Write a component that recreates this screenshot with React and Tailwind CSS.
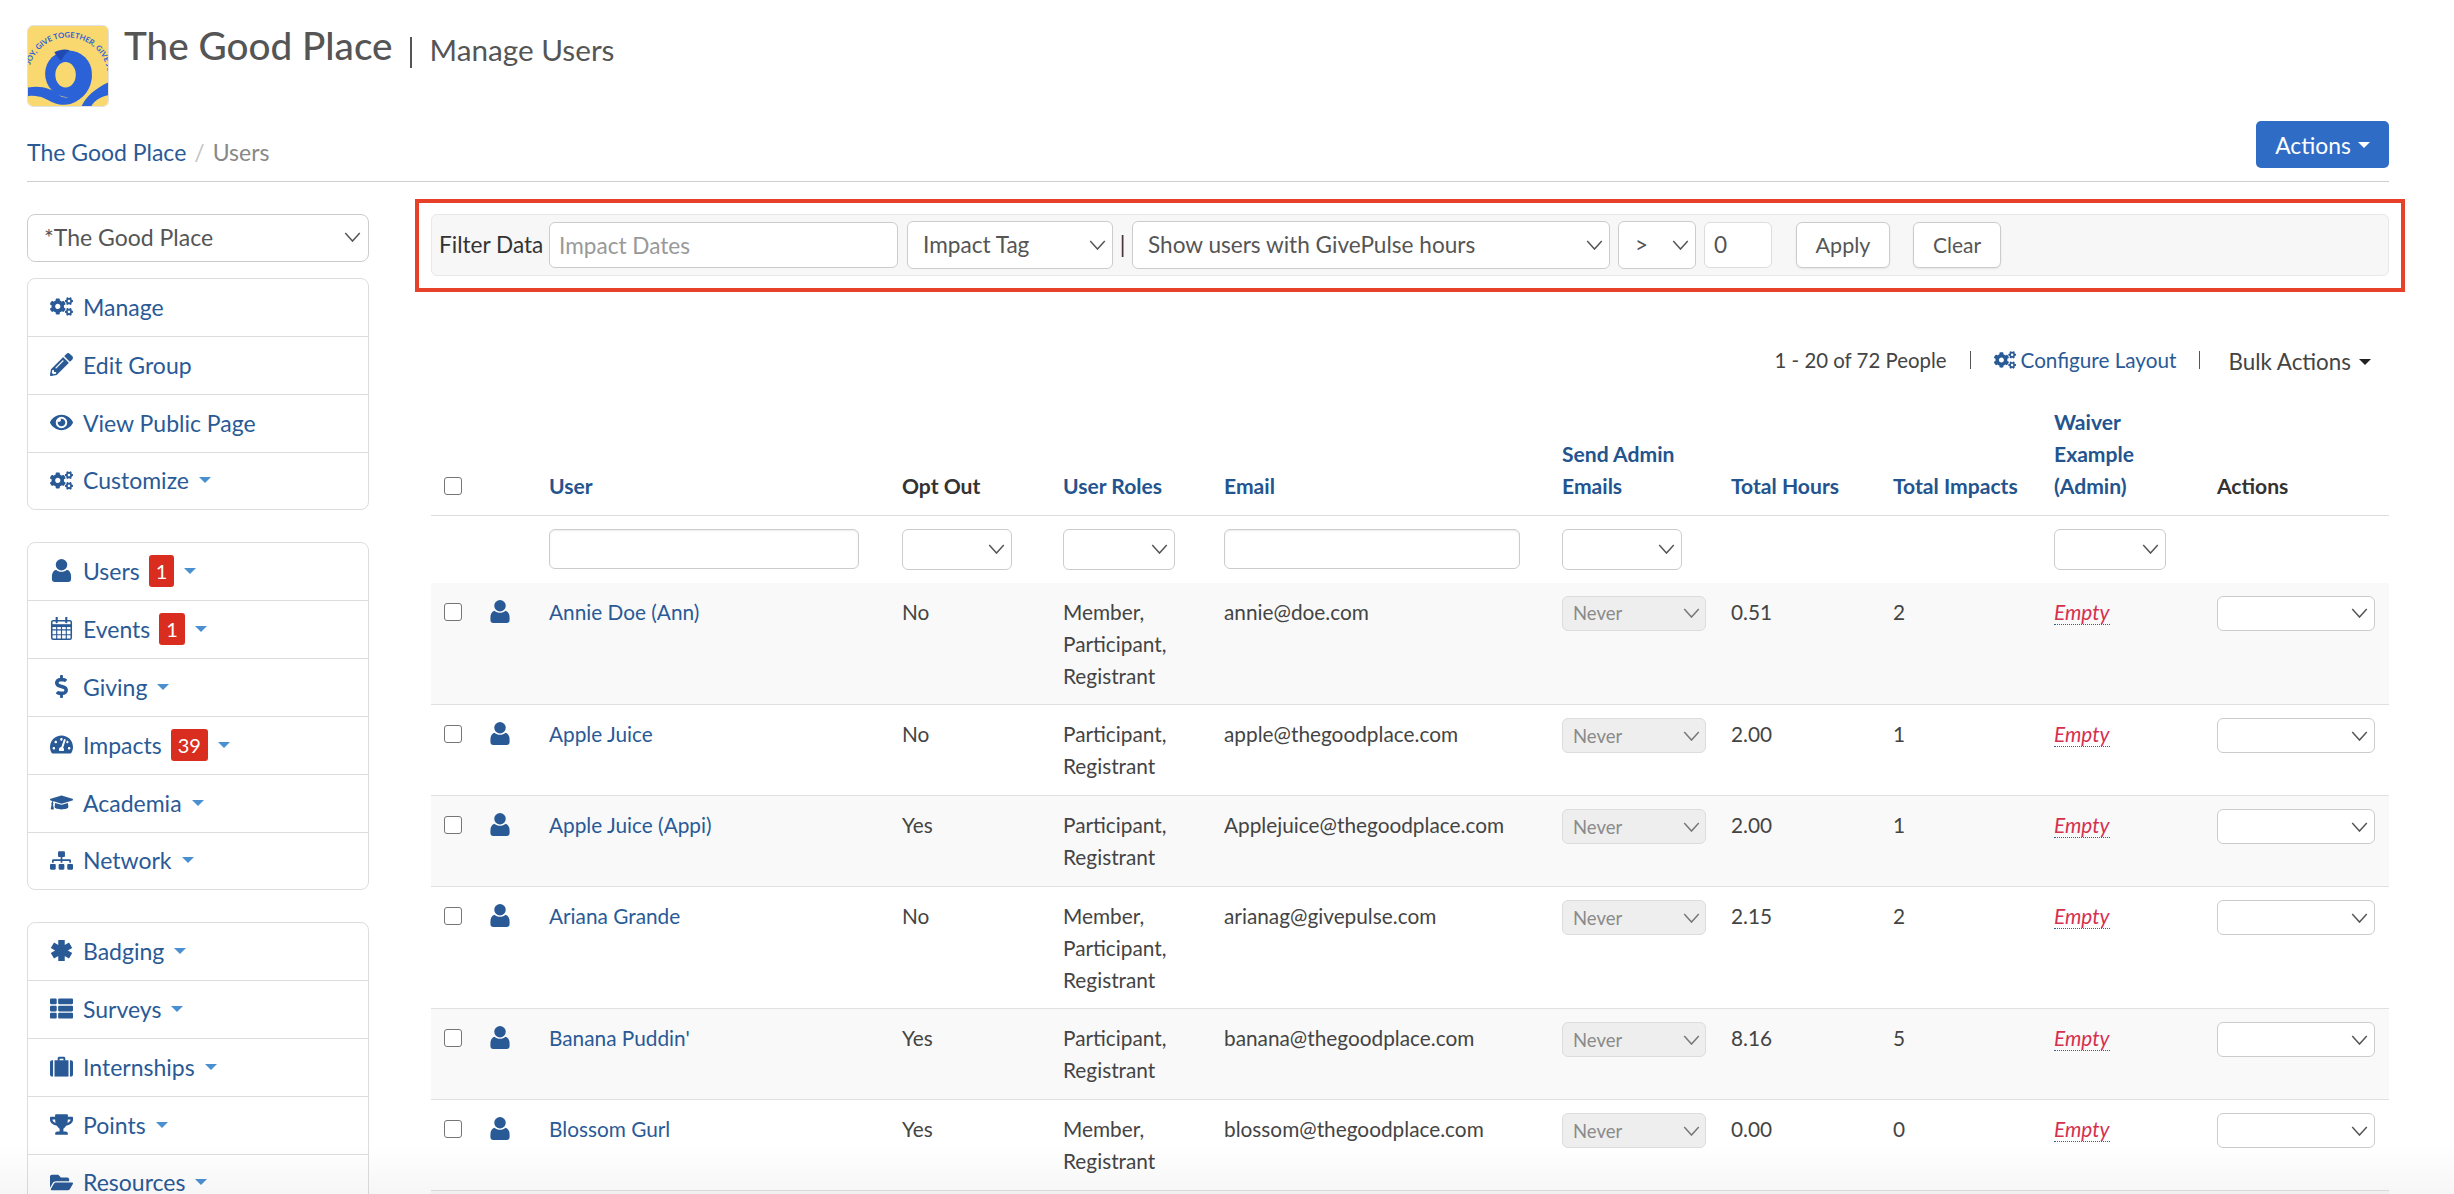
import React from 'react';
import {
  FaCogs, FaPencilAlt, FaEye, FaDollarSign, FaTachometerAlt,
  FaGraduationCap, FaSitemap, FaThList, FaTrophy, FaFolderOpen,
} from 'react-icons/fa';

const UserIcon = ({ className }) => (
  <svg viewBox="0 0 20 24" className={className} fill="currentColor">
    <circle cx="10" cy="6" r="6" />
    <path d="M4.4 11.2c1.4 1.5 3.4 2.2 5.6 2.2s4.200-.7 5.600-2.200c2.700.6 4.400 3.300 4.400 6.800v3.200c0 1.600-1.200 2.800-2.800 2.800H2.800C1.200 24 0 22.800 0 21.200V18c0-3.500 1.700-6.200 4.400-6.800z" />
  </svg>
);

const CalendarIcon = ({ className }) => (
  <svg viewBox="0 0 22 24" className={className} fill="none" stroke="currentColor">
    <rect x="0.8" y="3.800" width="20.400" height="19.400" rx="1.500" strokeWidth="1.600" />
    <path d="M1 9h20" strokeWidth="3" />
    <path d="M1 13.500h20M1 18.500h20M6 10v13M11 10v13M16 10v13" strokeWidth="1.200" />
    <path d="M6 0.500v5M16 0.500v5" strokeWidth="2.200" strokeLinecap="round" />
  </svg>
);

const AsteriskIcon = ({ className }) => (
  <svg viewBox="0 0 22 22" className={className} fill="none" stroke="currentColor" strokeWidth="6.200">
    <path d="M11 1v20M2.300 6l17.400 10M2.300 16l17.400-10" />
  </svg>
);

const BriefcaseIcon = ({ className }) => (
  <svg viewBox="0 0 24 22" className={className} fill="currentColor">
    <path d="M8 5V2.500C8 1.500 8.800.8 9.700.8h4.600c.9 0 1.700.7 1.700 1.700V5h-2V2.800h-4V5z" />
    <rect x="4.700" y="4.500" width="14.600" height="17" />
    <path d="M3.200 4.500v17H2.200C1 21.500 0 20.500 0 19.300V6.700C0 5.500 1 4.500 2.200 4.500zM20.800 4.500h1C23 4.500 24 5.500 24 6.700v12.600c0 1.200-1 2.200-2.200 2.200h-1z" />
  </svg>
);

const Chevron = ({ className }) => (
  <svg viewBox="0 0 18 11" className={className} fill="none" stroke="currentColor" strokeWidth="1.600">
    <path d="M1 1l8 9 8-9" />
  </svg>
);

const Caret = ({ className }) => (
  <span className={`inline-block w-0 h-0 border-x-[6px] border-x-transparent border-t-[6px] ${className}`}></span>
);

const Logo = () => (
  <svg viewBox="0 0 82 82" className="w-[82px] h-[82px] rounded-[6px] border border-[#e2e2e2] shrink-0">
    <rect width="82" height="82" fill="#f9d86f" />
    <defs>
      <path id="logo-arc" d="M0 52.800A40.800 40.800 0 0 1 82 52.800" />
    </defs>
    <text fontSize="7.800" fontWeight="700" fill="#2b62d8" fontFamily="Lato, sans-serif">
      <textPath href="#logo-arc" startOffset="13">JOY, GIVE TOGETHER, GIVE JOY</textPath>
    </text>
    <ellipse cx="41.500" cy="49" rx="24" ry="24" fill="#2b62d8" />
    <ellipse cx="38.500" cy="50" rx="10.500" ry="13" fill="#f9d86f" />
    <path d="M27 27c6-3 11-3.500 16-2-4 2-7 6-9 11-3-3-5-6-7-9z" fill="#1f4ab4" />
    <path d="M0 63c14-2 24 1 32 8 4 3 9 3 14 0 8-5 13-12 19.500-21 0 14-8 25-22 30-12 3-20-3-27-6-5-2-11-3-16.500-2z" fill="#2b62d8" />
    <path d="M55 82c4-9 14-18 27-24v13c-9 2-14 6-17 11z" fill="#2b62d8" />
  </svg>
);

const sideMenus = [
  [
    { icon: FaCogs, label: 'Manage' },
    { icon: FaPencilAlt, label: 'Edit Group' },
    { icon: FaEye, label: 'View Public Page' },
    { icon: FaCogs, label: 'Customize', caret: true },
  ],
  [
    { icon: UserIcon, label: 'Users', badge: '1', caret: true },
    { icon: CalendarIcon, label: 'Events', badge: '1', caret: true },
    { icon: FaDollarSign, label: 'Giving', caret: true },
    { icon: FaTachometerAlt, label: 'Impacts', badge: '39', caret: true },
    { icon: FaGraduationCap, label: 'Academia', caret: true },
    { icon: FaSitemap, label: 'Network', caret: true },
  ],
  [
    { icon: AsteriskIcon, label: 'Badging', caret: true },
    { icon: FaThList, label: 'Surveys', caret: true },
    { icon: BriefcaseIcon, label: 'Internships', caret: true },
    { icon: FaTrophy, label: 'Points', caret: true },
    { icon: FaFolderOpen, label: 'Resources', caret: true },
  ],
];

const users = [
  { name: 'Annie Doe (Ann)', optOut: 'No', roles: ['Member,', 'Participant,', 'Registrant'], email: 'annie@doe.com', hours: '0.51', impacts: '2' },
  { name: 'Apple Juice', optOut: 'No', roles: ['Participant,', 'Registrant'], email: 'apple@thegoodplace.com', hours: '2.00', impacts: '1' },
  { name: 'Apple Juice (Appi)', optOut: 'Yes', roles: ['Participant,', 'Registrant'], email: 'Applejuice@thegoodplace.com', hours: '2.00', impacts: '1' },
  { name: 'Ariana Grande', optOut: 'No', roles: ['Member,', 'Participant,', 'Registrant'], email: 'arianag@givepulse.com', hours: '2.15', impacts: '2' },
  { name: "Banana Puddin'", optOut: 'Yes', roles: ['Participant,', 'Registrant'], email: 'banana@thegoodplace.com', hours: '8.16', impacts: '5' },
  { name: 'Blossom Gurl', optOut: 'Yes', roles: ['Member,', 'Registrant'], email: 'blossom@thegoodplace.com', hours: '0.00', impacts: '0' },
];

const SelectBox = ({ label, className = '', disabled }) => (
  <div className={`flex items-center justify-between border rounded-[6px] ${disabled ? 'bg-[#eeeeee] border-[#dcdcdc] text-[#8a8a8a]' : 'bg-white border-[#cccccc] text-[#555555]'} ${className}`}>
    <span>{label}</span>
    <Chevron className={`w-[17px] h-[10px] shrink-0 ${disabled ? 'text-[#777777]' : 'text-[#555555]'}`} />
  </div>
);

const Checkbox = () => (
  <input type="checkbox" className="block appearance-none w-[18px] h-[18px] bg-white border-[1.5px] border-[#767676] rounded-[3px]" />
);

const FilterBar = () => (
  <div className="relative h-[62px] bg-[#f7f7f7] border border-[#e8e8e8] rounded-[6px] flex items-center pl-[7px] text-[22.6px]">
    <span className="w-[110px] text-[#333333]">Filter Data</span>
    <input
      placeholder="Impact Dates"
      className="w-[349px] h-[46px] px-[9px] bg-white border border-[#cccccc] rounded-[6px] placeholder:text-[#999999] outline-none"
    />
    <SelectBox label="Impact Tag" className="w-[206px] h-[48px] ml-[9px] pl-[15px] pr-[6px]" />
    <span className="w-[19px] text-center text-[#333333]">|</span>
    <SelectBox label="Show users with GivePulse hours" className="w-[478px] h-[48px] pl-[15px] pr-[6px]" />
    <SelectBox label=">" className="w-[78px] h-[48px] ml-[8px] pl-[16px] pr-[6px]" />
    <div className="w-[68px] h-[46px] ml-[8px] pl-[9px] flex items-center bg-white border border-[#dddddd] rounded-[6px] text-[#555555]">0</div>
    <button className="w-[94px] h-[46px] ml-[24px] bg-white border border-[#cccccc] rounded-[6px] text-[#555555] text-[21.5px] shadow-[0_1px_2px_rgba(0,0,0,0.08)]">Apply</button>
    <button className="w-[88px] h-[46px] ml-[23px] bg-white border border-[#cccccc] rounded-[6px] text-[#555555] text-[21px] shadow-[0_1px_2px_rgba(0,0,0,0.08)]">Clear</button>
    <div className="absolute -left-[17px] -right-[17px] -top-[16px] -bottom-[17px] border-[4px] border-[#e8412a] pointer-events-none"></div>
  </div>
);

const Th = ({ children, dark }) => (
  <th className={`px-[14px] pb-[13px] align-bottom text-left font-bold text-[21.1px] ${dark ? 'text-[#333333]' : 'text-[#23548e]'}`}>{children}</th>
);

const Td = ({ children, className = '' }) => (
  <td className={`px-[14px] pt-[13px] align-top ${className}`}>{children}</td>
);

export default function App() {
  return (
    <div className="relative h-[1194px] overflow-hidden bg-white pl-[27px] pr-[65px] pt-[25px] text-[23px] leading-[32px] text-[#444444] font-['Lato',sans-serif]">
      {/* Page title */}
      <div className="flex items-start gap-[15px] h-[96px]">
        <Logo />
        <div className="flex items-start text-[#555555]">
          <span className="text-[38.700px] leading-[40px] font-medium">The Good Place</span>
          <span className="ml-[17px] w-[2px] h-[31px] bg-[#555555] mt-[12px]"></span>
          <span className="ml-[18px] text-[29.700px] leading-[44px] mt-[3px]">Manage Users</span>
        </div>
      </div>

      {/* Breadcrumb and actions */}
      <div className="flex items-center justify-between h-[61px] border-b border-[#cfcfcf] pb-[13px]">
        <div className="flex items-center pt-[14px]">
          <span className="text-[#2a5a96]">The Good Place</span>
          <span className="mx-[8px] text-[#c4c4c4]">/</span>
          <span className="text-[#888888]">Users</span>
        </div>
        <button className="w-[133px] h-[47px] flex items-center justify-center gap-[7px] rounded-[5px] bg-[#2e6cc6] text-white text-[22.800px]">
          Actions <Caret className="border-t-white" />
        </button>
      </div>

      <div className="flex pt-[32px] gap-[62px]">
        {/* Sidebar */}
        <aside className="w-[342px] shrink-0">
          <SelectBox label="*The Good Place" className="h-[48px] pl-[16px] pr-[7px] pb-[2px] rounded-[8px]" />
          {sideMenus.map((menu, i) => (
            <div key={i} className={`border border-[#dddddd] rounded-[8px] bg-white ${i === 0 ? 'mt-[16px]' : 'mt-[32px]'}`}>
              {menu.map((item, j) => {
                const Icon = item.icon;
                return (
                  <div key={item.label} className={`flex items-center pl-[22px] pb-[2px] text-[#2a5a96] ${j > 0 ? 'border-t border-[#dddddd]' : ''} ${j === 0 || j === menu.length - 1 ? 'h-[57px]' : 'h-[58px]'}`}>
                    <span className="w-[33px] shrink-0 flex justify-start"><Icon className="w-[23px] h-[23px] text-[#2a5a96]" /></span>
                    <span>{item.label}</span>
                    {item.badge && (
                      <span className="ml-[9px] h-[32px] px-[7px] rounded-[3px] bg-[#d92d20] text-white text-[20px] leading-[32px]">{item.badge}</span>
                    )}
                    {item.caret && <Caret className="ml-[10px] border-t-[#4a90d0]" />}
                  </div>
                );
              })}
            </div>
          ))}
        </aside>

        {/* Main */}
        <main className="flex-1 min-w-0">
          <FilterBar />

          <div className="flex items-center justify-end h-[32px] mt-[68px] pr-[18px] text-[20.400px]">
            <span>1 - 20 of 72 People</span>
            <span className="ml-[23px] w-px h-[18px] bg-[#555555]"></span>
            <FaCogs className="ml-[23px] w-[22px] h-[22px] text-[#2a5a96]" />
            <span className="ml-[5px] text-[#2a5a96] text-[20.700px]">Configure Layout</span>
            <span className="ml-[23px] w-px h-[18px] bg-[#555555]"></span>
            <span className="ml-[28px] mt-[3px] text-[22.400px]">Bulk Actions</span>
            <Caret className="ml-[8px] mt-[3px] border-t-[#222222]" />
          </div>

          <table className="w-[1958px] table-fixed border-collapse mt-[30px] text-[20.800px]">
            <colgroup>
              <col className="w-[45px]" />
              <col className="w-[59px]" />
              <col className="w-[353px]" />
              <col className="w-[161px]" />
              <col className="w-[161px]" />
              <col className="w-[338px]" />
              <col className="w-[169px]" />
              <col className="w-[162px]" />
              <col className="w-[161px]" />
              <col className="w-[163px]" />
              <col className="w-[186px]" />
            </colgroup>
            <thead>
              <tr className="border-b border-[#dddddd]">
                <th className="pl-[13px] pb-[20px] align-bottom text-left">
                  <Checkbox />
                </th>
                <th></th>
                <Th>User</Th>
                <Th dark>Opt Out</Th>
                <Th>User Roles</Th>
                <Th>Email</Th>
                <Th>Send Admin Emails</Th>
                <Th>Total Hours</Th>
                <Th>Total Impacts</Th>
                <Th>Waiver Example (Admin)</Th>
                <Th dark>Actions</Th>
              </tr>
            </thead>
            <tbody>
              <tr className="h-[67px]">
                <td></td>
                <td></td>
                <td className="px-[14px]"><div className="w-[310px] h-[40px] border border-[#cccccc] rounded-[6px] shadow-[inset_0_1px_2px_rgba(0,0,0,0.08)]"></div></td>
                <td className="px-[14px]"><SelectBox className="w-[110px] h-[41px] pr-[6px]" /></td>
                <td className="px-[14px]"><SelectBox className="w-[112px] h-[41px] pr-[6px]" /></td>
                <td className="pl-[14px]"><div className="w-[296px] h-[40px] border border-[#cccccc] rounded-[6px] shadow-[inset_0_1px_2px_rgba(0,0,0,0.08)]"></div></td>
                <td className="px-[14px]"><SelectBox className="w-[120px] h-[41px] pr-[6px]" /></td>
                <td></td>
                <td></td>
                <td className="px-[14px]"><SelectBox className="w-[112px] h-[41px] pr-[6px]" /></td>
                <td></td>
              </tr>
              {users.map((u, i) => (
                <tr key={u.name} className={`border-b border-[#e0e0e0] ${u.roles.length === 3 ? 'h-[122px]' : 'h-[91px]'} ${i % 2 === 0 ? 'bg-[#f9f9f9]' : 'bg-white'}`}>
                  <td className="pl-[13px] pt-[20px] align-top">
                    <Checkbox />
                  </td>
                  <td className="pl-[14px] pt-[17px] align-top">
                    <UserIcon className="w-[20px] h-[23px] text-[#2a5a96]" />
                  </td>
                  <Td className="text-[#2a5a96]">{u.name}</Td>
                  <Td>{u.optOut}</Td>
                  <Td>{u.roles.map((r) => <div key={r}>{r}</div>)}</Td>
                  <Td>{u.email}</Td>
                  <Td><SelectBox label="Never" disabled className="w-[144px] h-[35px] pl-[10px] pr-[5px] text-[18.500px]" /></Td>
                  <Td>{u.hours}</Td>
                  <Td>{u.impacts}</Td>
                  <Td><span className="italic text-[#d6304f] border-b border-dotted border-[#1f66b0]">Empty</span></Td>
                  <Td><SelectBox className="w-[158px] h-[35px] pr-[6px]" /></Td>
                </tr>
              ))}
              <tr className="h-[60px] bg-[#f9f9f9]"><td colSpan={11}></td></tr>
            </tbody>
          </table>
        </main>
      </div>

      <div className="absolute inset-x-0 bottom-0 h-[50px] bg-linear-to-t from-[rgba(0,0,0,0.035)] to-transparent pointer-events-none"></div>
    </div>
  );
}
